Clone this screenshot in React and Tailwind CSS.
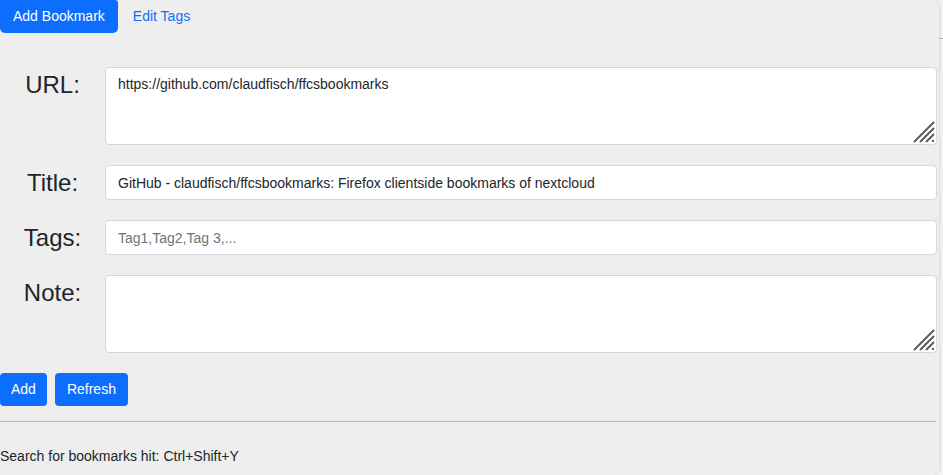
const FIELDS = [
    { label: "URL:", type: "area", value: "https://github.com/claudfisch/ffcsbookmarks" },
    { label: "Title:", type: "input", value: "GitHub - claudfisch/ffcsbookmarks: Firefox clientside bookmarks of nextcloud" },
    { label: "Tags:", type: "input", value: "", placeholder: "Tag1,Tag2,Tag 3,..." },
    { label: "Note:", type: "area", value: "" },
];

function Grip() {
    return (
        <svg width="22" height="22" viewBox="0 0 22 22" className="absolute right-[2px] bottom-[2px] pointer-events-none">
            <g stroke="#5a5a5a" strokeWidth="2">
                <line x1="1" y1="21" x2="21" y2="1" />
                <line x1="7" y1="21" x2="21" y2="7" />
                <line x1="13" y1="21" x2="21" y2="13" />
            </g>
            <rect x="19" y="19" width="2" height="2" fill="#5a5a5a" />
        </svg>
    );
}

function Field({ field }) {
    const base =
        "w-full bg-white border border-[#d4d7db] rounded-[4px] px-3 py-1.5 text-[14px] leading-[21px] text-[#212529] placeholder:text-[#6c757d] focus:outline-none";
    return (
        <div className="flex items-start">
            <label className="w-[105px] shrink-0 text-center text-[24px] leading-[35px] text-[#212529]">
                {field.label}
            </label>
            {field.type === "area" ? (
                <div className="relative w-full">
                    <textarea rows={3} defaultValue={field.value} className={base + " block h-[78px] resize-none"} />
                    <Grip />
                </div>
            ) : (
                <input
                    defaultValue={field.value}
                    placeholder={field.placeholder}
                    className={base + " h-[35px]"}
                />
            )}
        </div>
    );
}

export default function App() {
    return (
        <div className="flex w-[943px] h-[475px] overflow-hidden bg-[#f4f4f4] font-['Liberation_Sans',Arial,sans-serif]">
            <div className="w-[939px] h-full shrink-0 bg-[#eeeeee] rounded-r-[6px] shadow-[1px_0_3px_rgba(0,0,0,0.12)] pr-[2px]">
                {/* Tabs */}
                <nav className="flex items-center h-[33px]">
                    <button className="h-[33px] px-[13px] bg-[#0d6efd] text-white text-[14px] rounded-b-[5px] rounded-tr-[3px]">
                        Add Bookmark
                    </button>
                    <button className="h-[33px] px-[14px] ml-px text-[#0d6efd] text-[14px]">Edit Tags</button>
                </nav>

                {/* Form */}
                <div className="flex flex-col gap-[20px] mt-[34px]">
                    {FIELDS.map((f) => (
                        <Field key={f.label} field={f} />
                    ))}
                </div>

                <div className="flex gap-2 mt-[20px]">
                    <button className="h-[33px] px-[11px] bg-[#0d6efd] text-white text-[14px] rounded-[4px]">Add</button>
                    <button className="h-[33px] px-3 bg-[#0d6efd] text-white text-[14px] rounded-[4px]">Refresh</button>
                </div>

                <hr className="mt-[15px] mr-[1px] border-0 border-t border-[#b5b5b5]" />

                <p className="mt-[24px] text-[14px] leading-[21px] text-[#212529]">
                    Search for bookmarks hit: Ctrl+Shift+Y
                </p>
            </div>
            <div className="flex-1 mt-[38px] h-0 border-t border-[#a8a8a8]" />
        </div>
    );
}
